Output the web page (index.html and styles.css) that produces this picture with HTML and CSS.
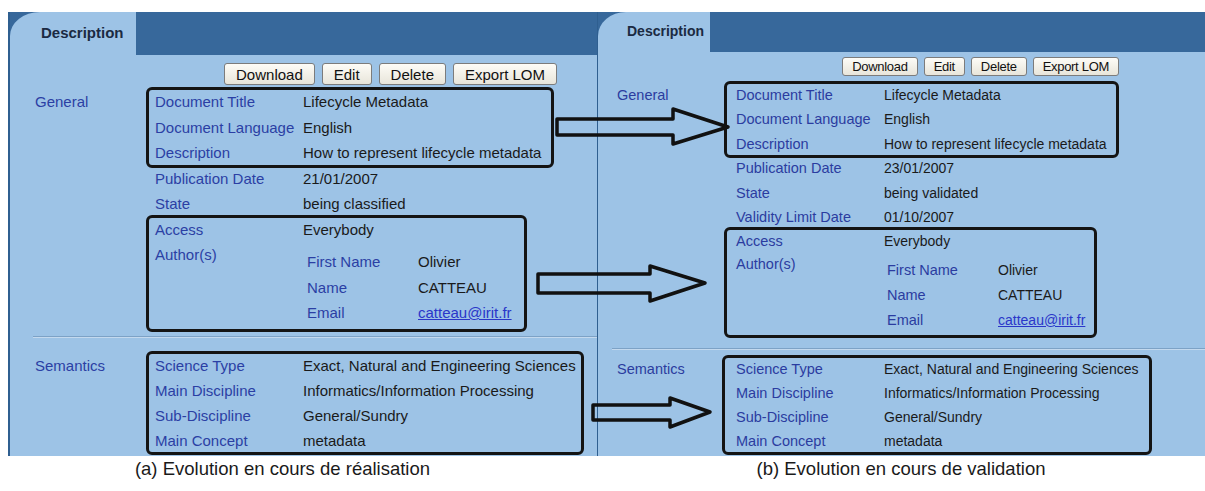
FILE: index.html
```html
<!DOCTYPE html>
<html lang="en">
<head>
	<meta charset="UTF-8">
	<title>Evolution des métadonnées</title>
	<link rel="stylesheet" href="styles.css">
</head>
<body>
	<div class="page">
		<div class="panels">
			<!-- (a) en cours de réalisation -->
			<section class="panel panel-a">
				<div class="tabbar"><div class="tab">Description</div></div>
				<div class="panel-body">
					<div class="actions">
						<button>Download</button>
						<button>Edit</button>
						<button>Delete</button>
						<button>Export LOM</button>
					</div>
					<div class="section">
						<div class="section-name">General</div>
						<div class="fields">
							<div class="group g1">
								<div class="row"><span class="lbl">Document Title</span><span class="val">Lifecycle Metadata</span></div>
								<div class="row"><span class="lbl">Document Language</span><span class="val">English</span></div>
								<div class="row"><span class="lbl">Description</span><span class="val">How to represent lifecycle metadata</span></div>
							</div>
							<div class="row"><span class="lbl">Publication Date</span><span class="val">21/01/2007</span></div>
							<div class="row"><span class="lbl">State</span><span class="val">being classified</span></div>
							<div class="group g2">
								<div class="row"><span class="lbl">Access</span><span class="val">Everybody</span></div>
								<div class="row row-authors">
									<span class="lbl">Author(s)</span>
									<div class="authors">
										<span class="lbl">First Name</span><span class="val">Olivier</span>
										<span class="lbl">Name</span><span class="val">CATTEAU</span>
										<span class="lbl">Email</span><a class="val mail" href="#">catteau@irit.fr</a>
									</div>
								</div>
							</div>
						</div>
					</div>
					<div class="divider"></div>
					<div class="section sem">
						<div class="section-name">Semantics</div>
						<div class="fields">
							<div class="group g3">
								<div class="row"><span class="lbl">Science Type</span><span class="val">Exact, Natural and Engineering Sciences</span></div>
								<div class="row"><span class="lbl">Main Discipline</span><span class="val">Informatics/Information Processing</span></div>
								<div class="row"><span class="lbl">Sub-Discipline</span><span class="val">General/Sundry</span></div>
								<div class="row"><span class="lbl">Main Concept</span><span class="val">metadata</span></div>
							</div>
						</div>
					</div>
				</div>
			</section>

			<!-- (b) en cours de validation -->
			<section class="panel panel-b">
				<div class="tabbar"><div class="tab">Description</div></div>
				<div class="panel-body">
					<div class="actions">
						<button>Download</button>
						<button>Edit</button>
						<button>Delete</button>
						<button>Export LOM</button>
					</div>
					<div class="section">
						<div class="section-name">General</div>
						<div class="fields">
							<div class="group g1">
								<div class="row"><span class="lbl">Document Title</span><span class="val">Lifecycle Metadata</span></div>
								<div class="row"><span class="lbl">Document Language</span><span class="val">English</span></div>
								<div class="row"><span class="lbl">Description</span><span class="val">How to represent lifecycle metadata</span></div>
							</div>
							<div class="row"><span class="lbl">Publication Date</span><span class="val">23/01/2007</span></div>
							<div class="row"><span class="lbl">State</span><span class="val">being validated</span></div>
							<div class="row"><span class="lbl">Validity Limit Date</span><span class="val">01/10/2007</span></div>
							<div class="group g2">
								<div class="row"><span class="lbl">Access</span><span class="val">Everybody</span></div>
								<div class="row row-authors">
									<span class="lbl">Author(s)</span>
									<div class="authors">
										<span class="lbl">First Name</span><span class="val">Olivier</span>
										<span class="lbl">Name</span><span class="val">CATTEAU</span>
										<span class="lbl">Email</span><a class="val mail" href="#">catteau@irit.fr</a>
									</div>
								</div>
							</div>
						</div>
					</div>
					<div class="divider"></div>
					<div class="section sem">
						<div class="section-name">Semantics</div>
						<div class="fields">
							<div class="group g3">
								<div class="row"><span class="lbl">Science Type</span><span class="val">Exact, Natural and Engineering Sciences</span></div>
								<div class="row"><span class="lbl">Main Discipline</span><span class="val">Informatics/Information Processing</span></div>
								<div class="row"><span class="lbl">Sub-Discipline</span><span class="val">General/Sundry</span></div>
								<div class="row"><span class="lbl">Main Concept</span><span class="val">metadata</span></div>
							</div>
						</div>
					</div>
				</div>
			</section>
		</div>

		<div class="captions">
			<p class="cap-a">(a) Evolution en cours de réalisation</p>
			<p class="cap-b">(b) Evolution en cours de validation</p>
		</div>

		<!-- annotation arrows drawn over both panels -->
		<svg class="arrows" width="1205" height="491" viewBox="0 0 1205 491">
			<polygon points="557,119 673,119 673,109 728,127 673,144 673,135 557,135"/>
			<polygon points="538,274 650,274 650,266 705,283 650,301 650,293 538,293"/>
			<polygon points="593,405 670,405 670,398 710,412 670,427 670,420 593,420"/>
		</svg>
	</div>
</body>
</html>
```

FILE: styles.css
```css
*{
	margin: 0;
	padding: 0;
	box-sizing: border-box;
}
body{
	background: #fff;
	font-family: "Liberation Sans", Arial, sans-serif;
	color: #1a1a1a;
}
.page{
	width: 1205px;
	height: 491px;
	position: relative;
	overflow: hidden;
}
.panels{
	display: flex;
	padding: 12px 0 0 8px;
}
.panel{
	background: #9dc3e6;
	display: flex;
	flex-direction: column;
	height: 444px;
}
.panel-a{
	width: 589px;
	border-left: 2px solid #2f5f90;
}
.panel-b{
	flex: 1;
	border-left: 1px solid #2f5f90;
}

/* tab bar */
.tabbar{
	background: #37689b;
	display: flex;
	height: 43px;
}
.tab{
	background: #9dc3e6;
	border-top-left-radius: 30px 24px;
	font-weight: bold;
	font-size: 15px;
	color: #1b2a42;
	display: flex;
	align-items: center;
	width: 126px;
	padding-left: 31px;
	padding-bottom: 2px;
}
.panel-b .tabbar{
	height: 40px;
}
.panel-b .tab{
	width: 112px;
	font-size: 14px;
	padding-left: 29px;
	padding-bottom: 2px;
	border-top-left-radius: 28px 24px;
}

/* buttons */
.actions{
	display: flex;
	justify-content: flex-end;
	gap: 7px;
	padding-right: 40px;
}
.actions button{
	font-family: "Liberation Sans", Arial, sans-serif;
	font-size: 15px;
	color: #111;
	height: 22px;
	padding: 0 11px;
	background: linear-gradient(#fdfcf7, #e8e5da);
	border: 1px solid #7c7c7c;
	border-radius: 3px;
}
.panel-a .panel-body{
	padding: 8px 0 0 25px;
}
.panel-b .panel-body{
	padding: 5px 0 0 19px;
}
.panel-b .actions{
	padding-right: 86px;
	gap: 6px;
}
.panel-b .actions button{
	font-size: 13px;
	height: 19px;
	padding: 0 9px;
	letter-spacing: -0.3px;
}

/* sections and rows */
.section{
	display: grid;
	grid-template-columns: 113px auto;
	margin-top: 4px;
}
.section-name,
.lbl{
	color: #2b3fa4;
}
.section-name,
.row{
	font-size: 15px;
	line-height: 25.5px;
}
.row{
	display: grid;
	grid-template-columns: 148px 1fr;
	padding-left: 7px;
	white-space: nowrap;
}
.group{
	outline: 3px solid #141414;
	outline-offset: -1px;
	border-radius: 4px;
}
.g1{ width: 404px; }
.g2{ width: 377px; padding-bottom: 4px; }
.g3{ width: 434px; }

.authors{
	display: grid;
	grid-template-columns: 111px 1fr;
	padding: 7px 0 0 4px;
}
.mail{
	color: #2a36c9;
	text-decoration: underline;
}

.divider{
	height: 2px;
	margin: 6px 0 0 -2px;
	border-top: 1px solid #7da2c6;
	border-bottom: 1px solid #c4d9ee;
}
.sem{
	margin-top: 15px;
}
.sem .row{
	line-height: 25px;
}

/* right panel metrics */
.panel-b .section{
	grid-template-columns: 109px auto;
	margin-top: 7px;
}
.panel-b .section-name,
.panel-b .row{
	font-size: 14.5px;
	line-height: 24.4px;
}
.panel-b .section-name{
	color: #2b3c9f;
}
.panel-b .lbl{
	color: #2b3ca0;
}
.panel-b .val{
	font-size: 14px;
}
.panel-b .row{
	padding-left: 10px;
}
.panel-b .g1{ width: 391px; }
.panel-b .g2{ width: 369px; padding-bottom: 3px; }
.panel-b .row-authors > .lbl{
	line-height: 20px;
}
.panel-b .authors{
	padding: 4px 0 0 3px;
	line-height: 25px;
}
.panel-b .divider{
	margin: 12px 0 0 -5px;
}
.panel-b .sem{
	margin-top: 7px;
}
.panel-b .sem .row{
	line-height: 24px;
}
.panel-b .g3{
	width: 426px;
	margin-left: -2px;
	padding-left: 2px;
}

/* captions */
.captions{
	display: grid;
	grid-template-columns: 589px 608px;
	padding-left: 8px;
	margin-top: 2px;
	font-size: 18.5px;
	line-height: 22px;
	color: #1a1a1a;
	text-align: center;
}
.cap-a{
	padding-right: 40px;
}

/* annotation overlay */
.arrows{
	position: absolute;
	top: 0;
	left: 0;
	pointer-events: none;
}
.arrows polygon{
	fill: none;
	stroke: #111;
	stroke-width: 3.5;
	stroke-linejoin: round;
}
```
